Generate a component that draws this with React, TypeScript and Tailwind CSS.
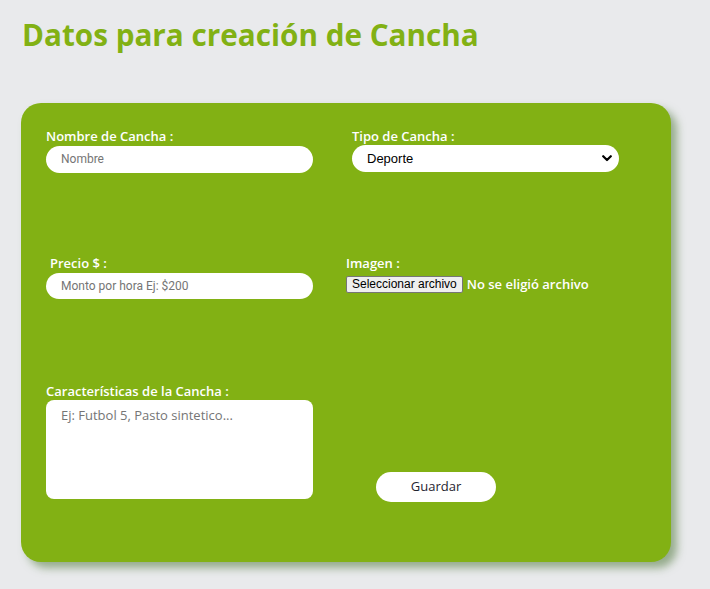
import React from 'react';

const label = "block text-[13px] font-semibold text-white leading-4 mb-[1px]";
const lbl = { fontFamily: '"Open Sans", "Lato", sans-serif' };
const roboto = { fontFamily: '"Roboto", "Liberation Sans", sans-serif' };
const arial = { fontFamily: '"Liberation Sans", Arial, sans-serif' };

const App: React.FC = () => {
  return (
    <div className="min-h-[589px] bg-[#e9eaec] px-[21px] pt-[14px] pb-[27px]" style={{ fontFamily: '"Open Sans", sans-serif' }}>
      <h1 className="text-[29.7px] font-bold text-[#82b114] leading-[42px] ml-[1px]">Datos para creación de Cancha</h1>

      <div className="mt-[47px] w-[650px] h-[459px] rounded-[20px] bg-[#82b114] pl-[25px] pt-[25px] shadow-[6px_6px_8px_rgba(80,120,60,0.55)]" style={lbl}>
        {/* row 1 */}
        <div className="flex">
          <div className="w-[267px]">
            <label className={label}>Nombre de Cancha :</label>
            <input
              placeholder="Nombre"
              className="w-[267px] h-[27px] rounded-full bg-white px-[15px] text-[12px] text-black placeholder:text-[#757575] outline-none"
              style={roboto}
            />
          </div>
          <div className="w-[267px] ml-[39px]">
            <label className={label}>Tipo de Cancha :</label>
            <div className="relative w-[267px] h-[27px]">
              <select
                className="w-full h-full appearance-none rounded-full bg-white pl-[15px] text-[13px] text-black outline-none"
                style={arial}
                defaultValue="Deporte"
              >
                <option>Deporte</option>
              </select>
              <svg className="absolute right-[7px] top-[10px] pointer-events-none" width="10" height="7" viewBox="0 0 10 7">
                <path d="M1.2 1.2 L5 5 L8.8 1.2" fill="none" stroke="#000" strokeWidth="2.2" strokeLinecap="round" strokeLinejoin="round" />
              </svg>
            </div>
          </div>
        </div>

        {/* row 2 */}
        <div className="flex mt-[82px]">
          <div className="w-[267px]">
            <label className={label + " ml-[4px]"}>Precio $ :</label>
            <input
              placeholder="Monto por hora Ej: $200"
              className="w-[267px] h-[26px] rounded-full bg-white px-[15px] text-[12px] text-black placeholder:text-[#757575] outline-none"
              style={roboto}
            />
          </div>
          <div className="ml-[33px]">
            <label className={label}>Imagen :</label>
            <div className="flex items-center mt-[4px]">
              <span
                className="h-[17px] px-[5px] text-[12px] leading-[15px] text-black bg-[#efefef] border border-[#767676] rounded-[2px]"
                style={arial}
              >
                Seleccionar archivo
              </span>
              <span className="ml-[4px] text-[13px] font-semibold text-white">No se eligió archivo</span>
            </div>
          </div>
        </div>

        {/* row 3 */}
        <div className="flex mt-[84px]">
          <div className="w-[267px]">
            <label className={label}>Características de la Cancha :</label>
            <textarea
              placeholder="Ej: Futbol 5, Pasto sintetico..."
              className="block w-[267px] h-[99px] resize-none rounded-[8px] bg-white px-[15px] py-[6px] text-[13px] text-black placeholder:text-[#757575] outline-none"
              style={lbl}
            />
          </div>
          <div className="ml-[63px] pt-[89px]">
            <button className="w-[120px] h-[30px] rounded-full bg-white text-[13px] font-medium text-[#1f2430]">Guardar</button>
          </div>
        </div>
      </div>
    </div>
  );
};

export default App;
